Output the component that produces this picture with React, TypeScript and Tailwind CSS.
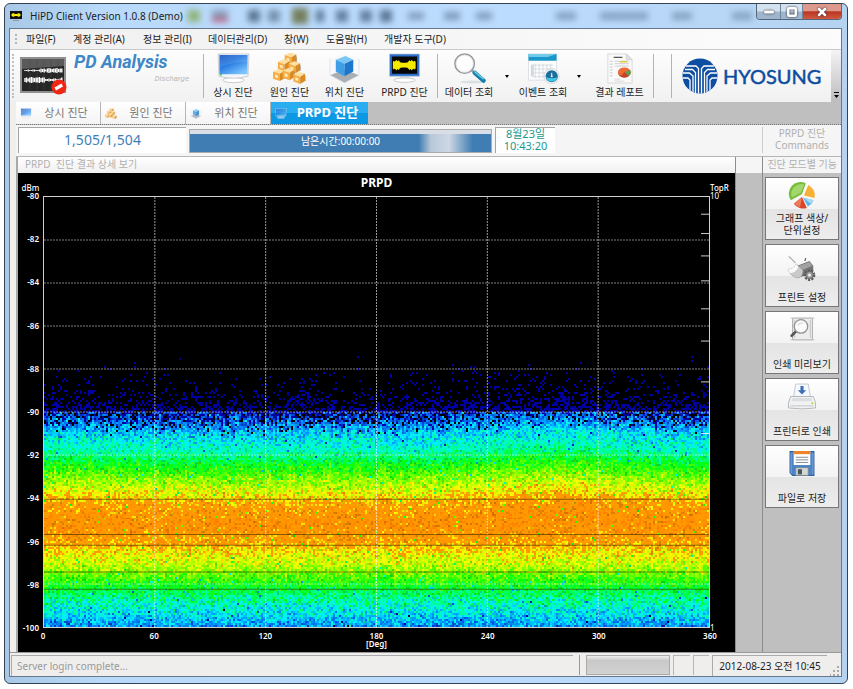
import React, { useLayoutEffect, useRef } from 'react';
import { Minus, Square, X } from 'lucide-react';

type IconProps = { className?: string };

const MonitorIcon: React.FC<IconProps> = ({ className = '' }) => (
  <svg viewBox="0 0 34 32" className={className} aria-hidden="true">
    <defs>
      <linearGradient id="screen" x1="0" y1="0" x2="0.7" y2="1">
        <stop offset="0" stopColor="#1350bd" />
        <stop offset="0.45" stopColor="#2478e2" />
        <stop offset="1" stopColor="#7cc4fb" />
      </linearGradient>
    </defs>
    <ellipse cx="17" cy="28" rx="11" ry="2.600" fill="#fff" stroke="#c4c8cc" />
    <path d="M1 1h32l-1 23q-15 4-30 0z" fill="#f3f5f7" stroke="#b5bcc4" strokeWidth="0.7" />
    <path d="M2.500 2h29v20h-29z" fill="url(#screen)" />
    <path d="M2.500 2h29v7q-16 0-29 6z" fill="#fff" opacity="0.12" />
    <circle cx="4" cy="22.500" r="1" fill="#39c439" />
  </svg>
);

const BOXES = [
  [13, 0],
  [6, 7],
  [17, 9],
  [1, 17],
  [11, 16],
  [22, 20],
];

const BoxesIcon: React.FC<IconProps> = ({ className = '' }) => (
  <svg viewBox="0 0 34 32" className={className} aria-hidden="true">
    {BOXES.map(([x, y]) => (
      <g key={`${x}-${y}`} transform={`translate(${x} ${y})`}>
        <path d="M9 1q3 3 2 8" fill="none" stroke="#8c8f94" strokeWidth="1" />
        <path d="M-1 2l6-2.500 6 2-5 3z" fill="#ffdf9e" />
        <path d="M-1 2l7 2.500v7.500l-7-2.500z" fill="#f5ae45" />
        <path d="M6 4.500l5-3v7.500l-5 3z" fill="#d98a22" />
        <path d="M1 5l3 1v3l-3-1z" fill="#ffe9be" />
      </g>
    ))}
  </svg>
);

const CubeIcon: React.FC<IconProps> = ({ className = '' }) => (
  <svg viewBox="0 0 34 32" className={className} aria-hidden="true">
    <path d="M2 6l15-5 15 5v17l-15 8-15-8z" fill="#f7f8fa" />
    <path d="M2 23l15-6 15 6-15 8z" fill="#a9aeb5" />
    <path d="M2 6v17l15 8 15-8V6" fill="none" stroke="#dfe2e6" strokeWidth="1" />
    <path d="M8 7l10-4 8 4-9 4z" fill="#7cc6f5" />
    <path d="M8 7l9 4v13l-9-5z" fill="#3f9de6" />
    <path d="M17 11l9-4v12l-9 5z" fill="#1d78cc" />
  </svg>
);

const WaveIcon: React.FC<IconProps> = ({ className = '' }) => (
  <svg viewBox="0 0 34 32" className={className} aria-hidden="true">
    <path d="M12 24h10v3H12z" fill="#dfe2e5" />
    <ellipse cx="17" cy="28" rx="11" ry="2.300" fill="#fff" stroke="#c4c8cc" />
    <path d="M1.500 1h31v23h-31z" fill="#2a6fcb" stroke="#c3cbd4" strokeWidth="0.7" />
    <path d="M4 3.500h26v18H4z" fill="#050505" />
    <path
      d="M5 9l1-1 1 1 1.500-2 1 1.500 1.500-1 1.500 2 2 .5h4l2-.5 1.500-2 1.500 1 1-1.500 1.500 2 1-1 1.500 1v7l-1.500 1-1-1-1.500 2-1-1.500-1.500 1-1.500-2-2-.5h-4l-2 .5-1.500 2-1.500-1-1 1.500-1.500-2-1 1-1-1z"
      fill="#f3ea00"
    />
  </svg>
);

const SearchIcon: React.FC<IconProps> = ({ className = '' }) => (
  <svg viewBox="0 0 34 32" className={className} aria-hidden="true">
    <ellipse cx="20" cy="30" rx="13" ry="1.500" fill="#dcdfe1" />
    <path d="M18.500 17l4 4" stroke="#9aa0a6" strokeWidth="2.500" />
    <path d="M22.500 20.500l9 8" stroke="#147fa8" strokeWidth="4.500" strokeLinecap="round" />
    <path d="M22.500 19.500l8.500 7" stroke="#6fcbe6" strokeWidth="1.500" strokeLinecap="round" />
    <circle cx="12" cy="11" r="10" fill="#fdfdfe" stroke="#94989d" strokeWidth="1.600" />
    <circle cx="12" cy="11" r="9" fill="none" stroke="#d5d8da" strokeWidth="0.8" />
  </svg>
);

const CalendarIcon: React.FC<IconProps> = ({ className = '' }) => (
  <svg viewBox="0 0 34 32" className={className} aria-hidden="true">
    <path d="M1.500 1h29v27h-29z" fill="#fbfcfd" stroke="#cfd4d8" strokeWidth="0.7" />
    <path d="M1.500 1h29v7h-29z" fill="#1897c8" />
    <path d="M1.500 1h29l-9 3H1.500z" fill="#70cbe8" />
    <path d="M5 12.500h22M5 16.500h22M5 20.500h22M5 24.500h22M8.500 11v15M12.500 11v15M16.500 11v15M20.500 11v15M24.500 11v15" stroke="#ccd2d7" strokeWidth="0.7" />
    <path d="M4 12h3v12H4z" fill="#d4d8dc" />
    <circle cx="25.500" cy="24" r="7.800" fill="#f3f5f6" stroke="#c4cacf" strokeWidth="0.6" />
    <circle cx="25.500" cy="24" r="6.300" fill="#1c6f9c" />
    <path d="M19.500 25a6.300 6.300 0 0012 0q-5 2-12 0z" fill="#41c7e6" />
    <path d="M25.500 20.500V25M24.500 24h2" stroke="#fff" strokeWidth="1" />
  </svg>
);

const ReportIcon: React.FC<IconProps> = ({ className = '' }) => (
  <svg viewBox="0 0 34 32" className={className} aria-hidden="true">
    <path d="M5 1h19l6 6v24H5z" fill="#fafafa" stroke="#d2d2d2" strokeWidth="0.8" />
    <path d="M24 1v6h6z" fill="#e1e1e1" stroke="#c4c4c4" strokeWidth="0.6" />
    <path d="M11 4.500h9" stroke="#555" strokeWidth="1.200" />
    <path d="M12 8.500h15M12 11h15M12 13.500h15" stroke="#cfcfcf" strokeWidth="1" />
    <path d="M17 9h8" stroke="#e5c945" strokeWidth="1.500" />
    <path d="M7 8.500h3M7 11.500h3M7 14.500h3M7 17.500h3M7 20.500h3M7 23.500h3" stroke="#c6c6c6" strokeWidth="1" />
    <ellipse cx="22" cy="20.500" rx="6.500" ry="5" fill="#b33a1c" />
    <ellipse cx="22" cy="19.500" rx="6.500" ry="4.500" fill="#ef6a35" />
    <path d="M22 19.500l6-2q2 4-2 6z" fill="#5da052" />
    <path d="M22 19.500l4 4q-4 1.500-7 0z" fill="#c9402a" />
    <path d="M12 27h6M12 29h10" stroke="#ccc" strokeWidth="0.8" />
  </svg>
);

const PieIcon: React.FC<IconProps> = ({ className = '' }) => (
  <svg viewBox="0 0 30 28" className={className} aria-hidden="true">
    <path d="M15 12.500L3.500 19A12 12 0 0119 1.500z" fill="#76bd3c" />
    <path d="M14 11L4.500 16A10.500 10.500 0 0117.500 2.500z" fill="#b8e27f" opacity="0.7" />
    <path d="M17 14l4.500-11a12 12 0 016.500 13.500z" fill="#f7b034" />
    <path d="M16 16l11 3a12 12 0 01-6 6.500z" fill="#5bb4e8" />
    <path d="M16 16l11 3-3 3.500z" fill="#a6daf6" />
    <path d="M15 15.500l5 11.500a12 12 0 01-13.500-4.500z" fill="#d9452b" />
    <path d="M15 15.500l-2 11-6.500-4z" fill="#ee7a58" />
  </svg>
);

const PrinterSetupIcon: React.FC<IconProps> = ({ className = '' }) => (
  <svg viewBox="0 0 32 28" className={className} aria-hidden="true">
    <path d="M2 1l7 7" stroke="#aaa" strokeWidth="1.300" />
    <path d="M11 11l13-5 4 5v7l-13 5z" fill="#757575" />
    <path d="M13 11l11-4 3 4-12 5z" fill="#a2a2a2" />
    <path d="M19 6l1-3" stroke="#555" strokeWidth="1.200" />
    <path d="M1 15q6 0 9-6l7 7q0 7-5 8-8-1-11-9z" fill="#cacaca" stroke="#949494" strokeWidth="0.6" />
    <path d="M1 15q6 0 9-6l2 4q-3 6-9 6z" fill="#fafafa" />
    <circle cx="24" cy="21" r="5" fill="none" stroke="#5a5a5a" strokeWidth="2.500" strokeDasharray="2.200 1.300" />
    <circle cx="24" cy="21" r="4" fill="#9b9b9b" stroke="#555" strokeWidth="0.8" />
    <circle cx="24" cy="21" r="1.600" fill="#f1f1f1" />
  </svg>
);

const PreviewIcon: React.FC<IconProps> = ({ className = '' }) => (
  <svg viewBox="0 0 26 26" className={className} aria-hidden="true">
    <path d="M4 2h19v21H4z" fill="#ededed" stroke="#a5a5a5" strokeWidth="0.9" />
    <path d="M2 2h2M23 2h2M2 23h2M23 23h2M6 4v17M21 4v17" stroke="#c0c0c0" strokeWidth="0.9" />
    <path d="M7 15l-4 4" stroke="#555" strokeWidth="2.500" strokeLinecap="round" />
    <circle cx="12" cy="10" r="6.500" fill="#fafafa" stroke="#929292" strokeWidth="1.300" />
    <path d="M9 9q2-3 5-2" fill="none" stroke="#ddd" strokeWidth="1.500" />
  </svg>
);

const PrinterIcon: React.FC<IconProps> = ({ className = '' }) => (
  <svg viewBox="0 0 28 26" className={className} aria-hidden="true">
    <path d="M8 1h12l2 12H6z" fill="#f6f9fd" stroke="#b8c1cb" strokeWidth="0.8" />
    <path d="M12.500 3h3v4h2.500l-4 4-4-4h2.500z" fill="#3f70b4" />
    <path d="M3 13h22l2 6v5q-13 2-26 0v-5z" fill="#f1f2f3" stroke="#a8adb1" strokeWidth="0.8" />
    <path d="M5 14.500h18l1 3H4z" fill="#dcdfe1" />
    <path d="M3 22h22" stroke="#c2c6c9" strokeWidth="1" />
    <circle cx="24" cy="19.500" r="1" fill="#b5cf38" />
  </svg>
);

const FloppyIcon: React.FC<IconProps> = ({ className = '' }) => (
  <svg viewBox="0 0 26 26" className={className} aria-hidden="true">
    <path d="M1.500 1.500h23v23H4l-2.500-2.500z" fill="#4b83c6" stroke="#2f5f9e" />
    <path d="M5 1.500h16v13H5z" fill="#fff" />
    <path d="M5 1h16v3H5z" fill="#f08326" />
    <path d="M7 7h12M7 9.500h12M7 12h12" stroke="#7d8791" strokeWidth="0.9" />
    <path d="M7 17h12v7.500H7z" fill="#d3d8d2" stroke="#76828d" strokeWidth="0.7" />
    <path d="M9 18.500h4v5H9z" fill="#4c5660" />
    <path d="M2.500 3v20M23.500 3v20" stroke="#82aee0" strokeWidth="0.8" />
  </svg>
);

const WAVE_BARS = [1, 1, 2, 1, 1, 2, 2, 1, 1, 2, 4, 3, 4, 2, 4, 5, 4, 3, 4, 4, 5, 3, 4, 4];

const AnalysisBadge: React.FC<IconProps> = ({ className = '' }) => (
  <svg viewBox="0 0 47 38" className={className} aria-hidden="true">
    <rect x="1" y="1" width="44" height="34" fill="#262626" stroke="#8f8f8f" strokeWidth="2" />
    <path d="M2 2h42v7L2 12z" fill="#5a5a5a" />
    <path d="M10 3v30M17 3v30M24 3v30M31 3v30M38 3v30" stroke="#4a4a4a" strokeWidth="0.5" />
    {WAVE_BARS.map((h, i) => (
      <g key={i}>
        <path d={`M${5 + i * 1.6} ${13.5 - h / 2}v${h}`} stroke="#fff" strokeWidth="1.400" />
        <path d={`M${5 + i * 1.6} ${23 - (WAVE_BARS[(i + 11) % 24] + 1) / 2}v${WAVE_BARS[(i + 11) % 24] + 1}`} stroke="#fff" strokeWidth="1.400" />
      </g>
    ))}
    <circle cx="39" cy="30" r="7.500" fill="#f02616" />
    <path d="M34.500 30.500l7-4 1.500 3-7 4z" fill="#fff" />
  </svg>
);

const HyosungMark: React.FC<IconProps> = ({ className = '' }) => (
  <svg viewBox="0 0 36 36" className={className} aria-hidden="true">
    <defs>
      <clipPath id="disc"><circle cx="18" cy="18" r="17.500" /></clipPath>
    </defs>
    <circle cx="18" cy="18" r="17.500" fill="#0d4ea2" />
    <g fill="none" stroke="#fff" strokeWidth="1.300" clipPath="url(#disc)">
      <path d="M4 8h10l2.500 2.500V36M32 8h-10l-2.500 2.500V36" />
      <path d="M3 11.500h7.500l3 3V36M33 11.500h-7.500l-3 3V36" />
      <path d="M1 15h6.500l3.500 3V36M35 15h-6.500l-3.500 3V36" />
      <path d="M0 20h6l2 2V34M36 20h-6l-2 2V34" />
    </g>
  </svg>
);

const MENUS = [
  { label: '파일(F)', width: 'w-[47px]' },
  { label: '계정 관리(A)', width: 'w-[70px]' },
  { label: '정보 관리(I)', width: 'w-[65px]' },
  { label: '데이터관리(D)', width: 'w-[76px]' },
  { label: '창(W)', width: 'w-[42px]' },
  { label: '도움말(H)', width: 'w-[58px]' },
  { label: '개발자 도구(D)', width: 'w-[79px]' },
];

const TABS = [
  { label: '상시 진단', icon: MonitorIcon },
  { label: '원인 진단', icon: BoxesIcon },
  { label: '위치 진단', icon: CubeIcon },
];

const SIDE_ACTIONS = [
  { lines: ['그래프 색상/', '단위설정'], icon: PieIcon, iconClass: 'h-[27px] w-[30px]' },
  { lines: ['프린트 설정'], icon: PrinterSetupIcon, iconClass: 'mt-[6px] h-[27px] w-[30px]' },
  { lines: ['인쇄 미리보기'], icon: PreviewIcon, iconClass: 'h-[27px] w-[30px]' },
  { lines: ['프린터로 인쇄'], icon: PrinterIcon, iconClass: 'h-[27px] w-[30px]' },
  { lines: ['파일로 저장'], icon: FloppyIcon, iconClass: 'h-[27px] w-[30px]' },
];

// Colour ramp of the pulse density, lowest first
const RAMP = [
  [0, 0, 0],
  [0, 0, 165],
  [0, 80, 225],
  [0, 150, 255],
  [0, 240, 255],
  [0, 255, 150],
  [0, 255, 10],
  [120, 255, 0],
  [250, 255, 0],
  [255, 155, 0],
  [255, 120, 0],
];

// [dBm, mean ramp level]
const PROFILE = [
  [-90, 2],
  [-90.6, 2.9],
  [-91.2, 4],
  [-91.8, 4.7],
  [-92.4, 5.9],
  [-93.1, 7.1],
  [-93.8, 8],
  [-94.3, 8.8],
  [-95.2, 9.2],
  [-96, 8.8],
  [-96.5, 8.1],
  [-97.1, 7.6],
  [-97.7, 6.6],
  [-98.3, 5.5],
  [-98.9, 4.6],
  [-99.4, 3.9],
  [-100, 2.7],
];

const COLS = 334;
const ROWS = 216;

const levelAt = (db: number) => {
  for (let i = 1; i < PROFILE.length; i++) {
    const [d0, l0] = PROFILE[i - 1];
    const [d1, l1] = PROFILE[i];
    if (db >= d1) return l0 + ((d0 - db) / (d0 - d1)) * (l1 - l0);
  }
  return 2.7;
};

const drawDensity = (ctx: CanvasRenderingContext2D) => {
  let seed = 1505;
  const rand = () => {
    seed = (seed * 1664525 + 1013904223) % 4294967296;
    return seed / 4294967296;
  };
  const image = ctx.createImageData(COLS, ROWS);
  for (let x = 0; x < COLS; x++) {
    const deg = (x / COLS) * 360;
    const bump = 0.35 * Math.exp(-(((deg - 275) / 45) ** 2)) + 0.15 * Math.exp(-((deg / 40) ** 2));
    const strip = (rand() - 0.5) * 0.3;
    for (let y = 0; y < ROWS; y++) {
      const raw = -80 - (y / ROWS) * 20;
      const db = raw > -95 ? raw - bump + strip : raw + strip;
      let level = 0;
      if (raw > -90) {
        const density = Math.max(0, (-87.2 - db) / 2.8);
        level = rand() < 0.003 * (density > 0 ? 1 : 0) + 0.5 * density ** 3 ? 1 : 0;
      } else {
        level = levelAt(db) + (rand() + rand() - 1) * (db < -91.5 && db > -98.5 ? 1 : 1.6);
        if (db > -91 && rand() < (91 + db) * 0.55) level = rand() < 0.5 ? 0 : 1;
        if (rand() < 0.01) level -= 2.5;
      }
      level = Math.min(9.99, Math.max(0, level));
      // the orange band has a hard edge against yellow
      if (level > 8.4) level = Math.max(9, level);
      const low = Math.floor(level);
      const mix = level - low;
      const shade = rand() < 0.1 ? 0.84 : 1;
      const at = (y * COLS + x) * 4;
      for (let c = 0; c < 3; c++) {
        image.data[at + c] = (RAMP[low][c] + (RAMP[low + 1][c] - RAMP[low][c]) * mix) * shade;
      }
      image.data[at + 3] = 255;
    }
  }
  ctx.putImageData(image, 0, 0);
};

const X_LABELS = [0, 60, 120, 180, 240, 300, 360];
const Y_LABELS = [-80, -82, -84, -86, -88, -90, -92, -94, -96, -98, -100];
const MARK_LINES = [70.3, 78.5, 81, 87.2, 91.2];
const RATE_TICKS = [4, 8.5, 13.7, 19.5, 26, 33.5, 43, 55];

const PrpdChart: React.FC = () => {
  const canvasRef = useRef<HTMLCanvasElement>(null);

  useLayoutEffect(() => {
    const ctx = canvasRef.current?.getContext('2d');
    if (ctx) drawDensity(ctx);
  }, []);

  return (
    <figure className="grid min-h-[420px] flex-1 grid-cols-[25px_1fr_25px] grid-rows-[23px_1fr_24px] bg-black text-[8px] font-semibold leading-none text-white">
      <div className="flex items-end justify-center pb-1 font-medium">dBm</div>
      <figcaption className="pt-1 text-center text-[12px] font-bold">PRPD</figcaption>
      <div className="flex items-end justify-start pb-1 font-medium">TopR</div>

      <div className="flex flex-col justify-between pr-1 text-right">
        {Y_LABELS.map((label) => (
          <span key={label} className="flex h-0 items-center justify-end">{label}</span>
        ))}
      </div>
      <div className="relative border border-[#d0d0d0]">
        <canvas ref={canvasRef} width={COLS} height={ROWS} className="absolute inset-0 h-full w-full [image-rendering:pixelated]" />
        <svg viewBox="0 0 100 100" preserveAspectRatio="none" className="absolute inset-0 h-full w-full">
          <g stroke="#fff" fill="none">
            {[1, 2, 3, 4, 5].map((i) => (
              <path key={i} d={`M${(i * 100) / 6} 0V100`} strokeOpacity="0.600" strokeDasharray="2 1" vectorEffect="non-scaling-stroke" />
            ))}
            {[1, 2, 3, 4, 5, 6, 9].map((i) => (
              <path key={i} d={`M0 ${i * 10}H100`} strokeOpacity="0.500" strokeDasharray="2 1" vectorEffect="non-scaling-stroke" />
            ))}
            {RATE_TICKS.map((y) => (
              <path key={y} d={`M98.800 ${y}H100`} strokeOpacity="0.800" vectorEffect="non-scaling-stroke" />
            ))}
          </g>
          {MARK_LINES.map((y) => (
            <path key={y} d={`M0 ${y}H100`} stroke="#3a2a00" strokeOpacity="0.600" vectorEffect="non-scaling-stroke" />
          ))}
        </svg>
      </div>
      <div className="flex flex-col justify-between font-normal">
        <span className="flex h-0 items-center">10</span>
        <span className="flex h-0 items-center">1</span>
      </div>

      <div />
      <div className="pt-1">
        <div className="flex justify-between">
          {X_LABELS.map((label) => (
            <span key={label} className="flex w-0 justify-center">{label}</span>
          ))}
        </div>
        <div className="text-center">[Deg]</div>
      </div>
      <div />
    </figure>
  );
};

const Separator: React.FC = () => <div className="h-[44px] w-px shrink-0 bg-[#b4b4b4]" />;

const ToolButton: React.FC<{ label: string; icon: React.FC<IconProps>; width: string }> = ({ label, icon: Icon, width }) => (
  <button className={`flex shrink-0 flex-col items-center whitespace-nowrap leading-[16px] ${width}`}>
    <Icon className="h-[31px] w-[33px]" />
    <span>{label}</span>
  </button>
);

const DropArrow: React.FC<{ label: string }> = ({ label }) => (
  <button aria-label={label} className="flex w-[14px] shrink-0 justify-center">
    <svg viewBox="0 0 4 3" className="h-[3px] w-[4px]"><path d="M0 0h4L2 3z" /></svg>
  </button>
);

export default function App() {
  return (
    <div className="flex min-h-screen bg-white pb-[5px] pl-[4px] pr-[5px] pt-[3px] font-['Noto_Sans','Noto_Sans_CJK_KR',sans-serif] text-[10px] text-[#1c1c1c]">
      <div className="flex flex-1 flex-col overflow-hidden rounded-md border border-[#344354] bg-[linear-gradient(90deg,#a9c8e8,#b9dafa_12%,#bcdcff_60%,#b5d3f1)] pb-[6px] pl-[4px] pr-[5px]">
        {/* Title bar */}
        <header className="relative flex h-[24px] shrink-0 items-center">
          {/* what lies behind the glass */}
          <div className="absolute inset-y-1 left-[179px] right-[90px] flex items-center blur-[3px]" aria-hidden="true">
            <div className="mr-3 h-3 w-3 bg-[#8fb478]" />
            <div className="mr-5 h-3 w-4 border-b-4 border-[#c45c7c] bg-[#8b9cb9]" />
            <div className="mr-2 h-3 w-3 bg-[#5c7795]" />
            <div className="mr-3 h-3 w-3 bg-[#7791ae]" />
            <div className="mr-2 h-4 w-4 bg-[#747f5c]" />
            <div className="mr-3 h-3 w-2 bg-[#5f7a98]" />
            <div className="mr-3 h-3 w-3 bg-[#6580a0]" />
            <div className="mr-2 h-3 w-3 bg-[#6580a0]" />
            <div className="mr-4 h-3 w-3 bg-[#5b7796]" />
            <div className="mr-5 h-2 w-4 bg-[#84a0c0]" />
            <div className="mr-4 h-2 w-4 bg-[#7f9bbb]" />
            <div className="h-2 w-4 bg-[#84a0c0]" />
            <div className="ml-auto mr-6 h-2 w-5 bg-[#86a4c4]" />
            <div className="mr-6 h-2 w-12 bg-[#86a4c4]" />
            <div className="mr-10 h-2 w-5 bg-[#86a4c4]" />
            <div className="h-2 w-5 bg-[#86a4c4]" />
          </div>
          <svg viewBox="0 0 12 10" className="relative ml-px mr-2 h-[10px] w-[12px]" aria-hidden="true">
            <path d="M0 0h12v8H0z" fill="#111" />
            <path d="M1 4l2-2 2 1h2l2-1 2 2-2 2-2-1H5L3 6z" fill="#f5ed00" />
            <path d="M3 9.500h6" stroke="#999" />
          </svg>
          <h1 className="relative">HiPD Client Version 1.0.8 (Demo)</h1>
          <div className="relative ml-auto flex h-[16px] self-start overflow-hidden rounded-b border border-t-0 border-[#55677b]">
            <button aria-label="최소화" className="flex w-[24px] items-center justify-center border-r border-[#71859b] bg-[linear-gradient(#d4e1ef_48%,#9fb5cd_52%)]">
              <Minus size={12} strokeWidth={6} className="text-white drop-shadow-[0_0_1px_#222]" />
            </button>
            <button aria-label="최대화" className="flex w-[22px] items-center justify-center border-r border-[#71859b] bg-[linear-gradient(#d4e1ef_48%,#9fb5cd_52%)]">
              <Square size={10} strokeWidth={6} className="text-white drop-shadow-[0_0_1px_#222]" />
            </button>
            <button aria-label="닫기" className="flex w-[38px] items-center justify-center bg-[linear-gradient(#dd9a8c_45%,#bb3522_52%,#cf5a42)]">
              <X size={12} strokeWidth={5} className="text-white drop-shadow-[0_0_1px_#222]" />
            </button>
          </div>
        </header>

        <div className="flex flex-1 flex-col border border-[#66788b] bg-[#f0efee]">
          {/* Menu bar */}
          <nav className="flex h-[21px] shrink-0 items-center border-b border-[#c9c9c9] bg-[linear-gradient(90deg,#f0f0f0,#fcfcfc)]">
            <div className="mx-[5px] h-[10px] border-l-2 border-dotted border-[#b5b5b5]" />
            {MENUS.map(({ label, width }) => (
              <button key={label} className={`shrink-0 whitespace-nowrap pl-[4px] text-left ${width}`}>{label}</button>
            ))}
          </nav>

          {/* Toolbar */}
          <div className="flex h-[52px] shrink-0 items-center bg-[linear-gradient(#fdfdfd,#f1f1f1)]">
            <div className="ml-[2px] h-[44px] shrink-0 border-l-2 border-dotted border-[#c0c0c0]" />
            <AnalysisBadge className="ml-[6px] h-[38px] w-[47px] shrink-0" />
            <div className="ml-[7px] flex h-[48px] w-[129px] shrink-0 flex-col font-['Roboto',sans-serif] italic">
              <span className="whitespace-nowrap text-[18px] font-bold leading-[20px] text-[#3e88c8]">PD Analysis</span>
              <span className="pr-[14px] text-right text-[8px] leading-[14px] text-[#b9b9b9]">Discharge</span>
            </div>
            <Separator />
            <ToolButton label="상시 진단" icon={MonitorIcon} width="w-[58px]" />
            <ToolButton label="원인 진단" icon={BoxesIcon} width="w-[55px]" />
            <ToolButton label="위치 진단" icon={CubeIcon} width="w-[55px]" />
            <ToolButton label="PRPD 진단" icon={WaveIcon} width="w-[65px]" />
            <Separator />
            <ToolButton label="데이터 조회" icon={SearchIcon} width="w-[62px]" />
            <DropArrow label="데이터 조회 목록" />
            <ToolButton label="이벤트 조회" icon={CalendarIcon} width="w-[58px]" />
            <DropArrow label="이벤트 조회 목록" />
            <ToolButton label="결과 레포트" icon={ReportIcon} width="w-[67px]" />
            <Separator />
            <div className="w-[17px] shrink-0" />
            <Separator />
            <HyosungMark className="ml-[10px] h-[36px] w-[36px] shrink-0" />
            <span className="ml-[5px] font-['Lato',sans-serif] text-[20px] leading-none text-[#0d4ea2] [-webkit-text-stroke:0.5px_#0d4ea2]">HYOSUNG</span>
            <button aria-label="도구 모음 옵션" className="ml-auto flex h-full w-[10px] shrink-0 items-end justify-center bg-[linear-gradient(#f4f4f4,#bcbcbc)] pb-1">
              <svg viewBox="0 0 5 6" className="h-[6px] w-[5px]"><path d="M0 0h5v1H0zM0 3h5L2.500 6z" /></svg>
            </button>
          </div>

          <div className="flex flex-1 flex-col pl-[6px]">
            {/* Mode tabs */}
            <div role="tablist" className="flex h-[23px] shrink-0 border-b border-dotted border-[#777] bg-[#bfbfbf]">
              {TABS.map(({ label, icon: Icon }) => (
                <button key={label} role="tab" aria-selected="false" className="flex w-[85px] items-center border-r border-[#b5b5b5] bg-[linear-gradient(#fff,#f4f4f4)] pl-[4px] text-[11px] text-[#777]">
                  <Icon className="h-[11px] w-[12px] opacity-80" />
                  <span className="flex-1 text-center">{label}</span>
                </button>
              ))}
              <button role="tab" aria-selected="true" className="flex w-[97px] items-center bg-[linear-gradient(#27adf0_50%,#0d98e4_50%)] pl-[4px] text-[13px] font-bold text-white">
                <MonitorIcon className="h-[11px] w-[12px] opacity-60" />
                <span className="flex-1 text-center">PRPD 진단</span>
              </button>
            </div>

            {/* Progress and clock */}
            <div className="flex h-[32px] shrink-0 items-start border-b border-[#b5b5b5] bg-[#f5f5f5] pt-[2px]">
              <output className="ml-[2px] h-[26px] w-[168px] shrink-0 border-l border-t border-[#a5a5a5] bg-white text-center text-[14px] leading-[24px] text-[#3f7fb8]">1,505/1,504</output>
              <div role="progressbar" aria-label="남은시간" className="ml-[3px] mt-[2px] h-[24px] w-[303px] shrink-0 border border-[#aaa] bg-[#d8dde6] pt-[4px]">
                <div className="h-full bg-[linear-gradient(90deg,#407db2_76%,#b8c8da_80%,#ced7e3_86%,#407db2_94%)] text-center leading-[14px] text-white">
                  남은시간:00:00:00
                </div>
              </div>
              <time className="ml-[3px] h-[26px] w-[60px] shrink-0 border-l border-t border-[#a5a5a5] bg-white text-center text-[11px] leading-[12px] text-[#1b998b]">
                8월23일<br />10:43:20
              </time>
              <div className="ml-auto h-[26px] w-[79px] border-l border-[#ccc] text-center leading-[12px] text-[#b0b0b0]">
                PRPD 진단<br />Commands
              </div>
            </div>

            {/* Chart and side actions */}
            <div className="flex flex-1 border-l-2 border-[#a8a8a8] bg-[#bfbfbf]">
              <section className="flex flex-1 flex-col">
                <h2 className="h-[16px] shrink-0 bg-[linear-gradient(#fff,#f0f0f0)] pl-[7px] leading-[14px] text-[#b0b0b0]">PRPD&nbsp; 진단 결과 상세 보기</h2>
                <PrpdChart />
              </section>
              <div className="w-[27px] shrink-0 border-l border-[#8c8c8c]">
                <div className="h-[16px] bg-[#f5f5f5]" />
              </div>
              <aside className="w-[79px] shrink-0 border-l border-[#8c8c8c]">
                <h2 className="h-[16px] whitespace-nowrap bg-[#f5f5f5] pr-1 text-right leading-[14px] text-[#b0b0b0]">진단 모드별 기능</h2>
                <div className="flex flex-col gap-[4px] px-[2px] pt-[4px]">
                  {SIDE_ACTIONS.map(({ lines, icon: Icon, iconClass }) => (
                    <button key={lines[0]} className="flex h-[63px] flex-col items-center justify-between border border-[#777] bg-[linear-gradient(#fff,#f3f3f3_50%,#e4e4e4_50%,#ededed)] pb-[3px] pt-[4px] leading-[12px]">
                      <Icon className={iconClass} />
                      <span>
                        {lines.map((line) => (
                          <span key={line} className="block whitespace-nowrap">{line}</span>
                        ))}
                      </span>
                    </button>
                  ))}
                </div>
              </aside>
            </div>
          </div>

          {/* Status bar */}
          <footer className="flex h-[24px] shrink-0 items-center gap-[3px] border-t border-[#999] bg-[#f0eeed] px-[1px] pt-px">
            <div className="h-[21px] flex-1 border-l border-t border-[#aaa] pl-[5px] leading-[20px] text-[#9a9a9a]">Server login complete...</div>
            <div className="ml-[3px] h-[20px] w-[4px] border-l border-[#999]" />
            <div className="h-[20px] w-[84px] border border-[#aaa] bg-[linear-gradient(#eee,#c8c8c8_25%,#d2d2d2)]" />
            <div className="h-[20px] w-[17px] border-l border-t border-[#b5b5b5]" />
            <div className="h-[20px] w-[16px] border-l border-t border-[#b5b5b5]" />
            <time className="h-[21px] w-[115px] whitespace-nowrap border-l border-t border-[#aaa] text-center leading-[20px]">2012-08-23 오전 10:45</time>
            <svg viewBox="0 0 10 10" className="h-[10px] w-[10px] self-end" fill="#aaa" aria-hidden="true">
              <path d="M7 0h2v2H7zM7 4h2v2H7zM7 8h2v2H7zM3 4h2v2H3zM3 8h2v2H3zM0 8h1v2H0z" />
            </svg>
          </footer>
        </div>
      </div>
    </div>
  );
}
